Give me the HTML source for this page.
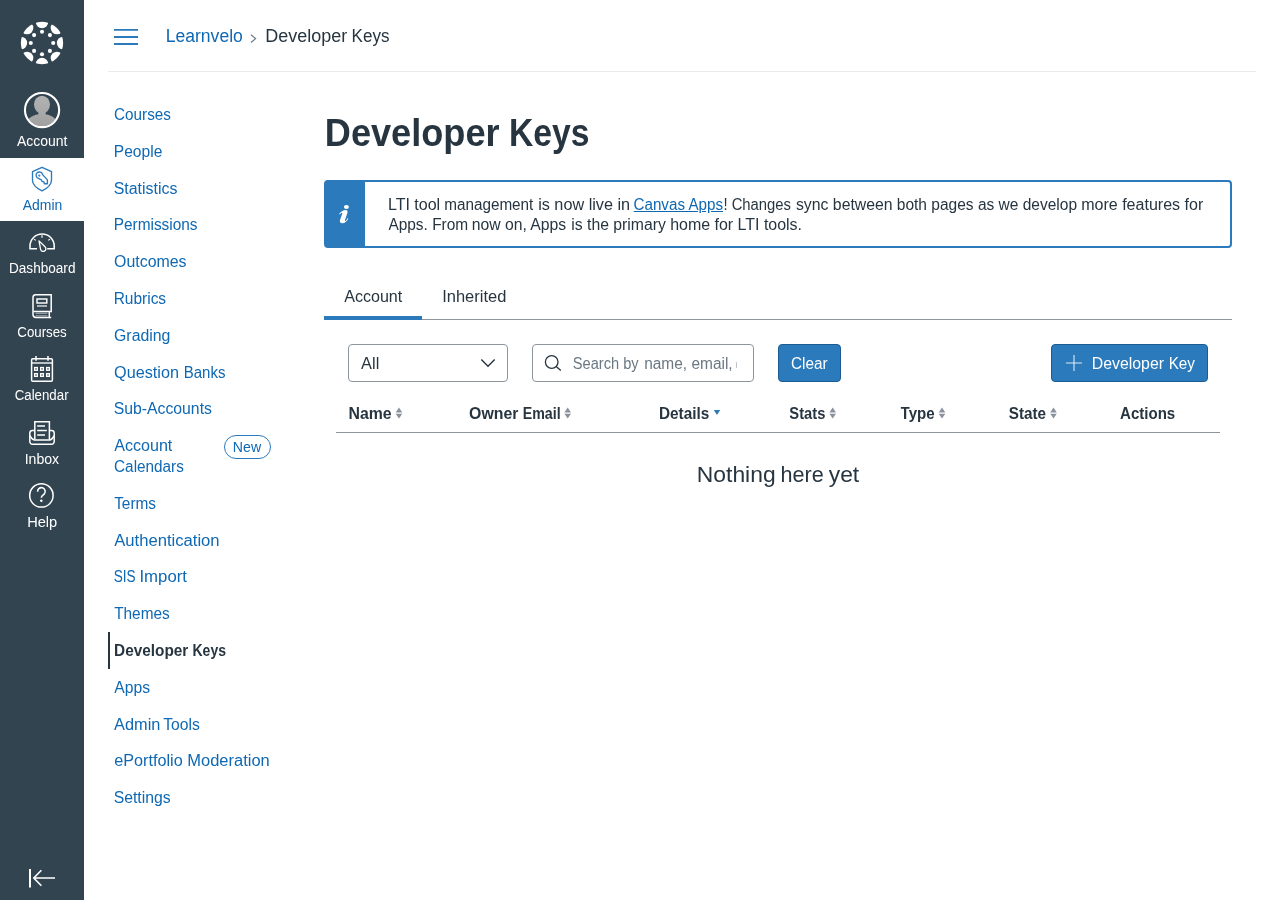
<!DOCTYPE html>
<html lang="en">
<head>
<meta charset="utf-8">
<title>Developer Keys</title>
<style>
*{box-sizing:border-box;margin:0;padding:0}
html,body{width:1280px;height:900px;overflow:hidden;background:#fff}
body{font-family:"Liberation Sans",sans-serif;color:#273540;font-size:16px;position:relative}
a{color:#0E68B3;text-decoration:none}
svg{position:absolute;overflow:visible}
.t{position:absolute;display:block;white-space:nowrap;transform-origin:0 0;line-height:1.2;font-size:16px}
.f14{font-size:14px}.f13{font-size:13px}.f18{font-size:18px}.f22{font-size:22px}.f38{font-size:38px}
.b{font-weight:bold}
.lnk{color:#0E68B3}
.wh{color:#fff}
#gnav{position:absolute;left:0;top:0;width:84px;height:900px;background:#334451}
#gnav .act{position:absolute;left:0;top:158px;width:84px;height:63px;background:#fff}
#hdr{position:absolute;left:108px;top:0;width:1148px;height:72px;border-bottom:1px solid #E8EAEC}
#snav .bar{position:absolute;left:108px;top:632px;width:2px;height:37px;background:#273540}
#snav .pill{position:absolute;left:224px;top:435px;width:47px;height:24px;border:1px solid #2B7ABC;border-radius:12px}
#alert{position:absolute;left:324px;top:180px;width:908px;height:68px;border:2px solid #2B7ABC;border-radius:4px;background:#fff}
#alert .strip{position:absolute;left:0;top:0;width:39px;height:64px;background:#2B7ABC}
#tabs{position:absolute;left:324px;top:276px;width:908px;height:44px;border-bottom:1px solid #8D959F}
#tabs .sel{position:absolute;left:0;top:40px;width:98px;height:4px;background:#2B7ABC}
.box{position:absolute;border:1px solid #8D959F;border-radius:4px;background:#fff;height:38px;top:344px}
.btn{position:absolute;top:344px;height:38px;background:#2B7ABC;border:1px solid #1C5C93;border-radius:4px}
#thead{position:absolute;left:336px;top:394px;width:884px;height:39px;border-bottom:1px solid #8D959F}
</style>
</head>
<body>
<nav id="gnav">
  <div class="act"></div>
  <svg style="left:0;top:0" width="84" height="900" viewBox="0 0 84 900" fill="none">
    <defs>
      <clipPath id="lgc"><circle cx="42" cy="43" r="21.15"/></clipPath>
      <clipPath id="avc"><circle cx="42" cy="110" r="16.3"/></clipPath>
      <linearGradient id="avg" gradientUnits="userSpaceOnUse" x1="0" y1="95" x2="0" y2="127"><stop offset="0" stop-color="#b3b3b3"/><stop offset="1" stop-color="#a0a0a0"/></linearGradient>
    </defs>
    <g clip-path="url(#lgc)" fill="#fff"><circle cx="42.00" cy="21.85" r="6.3"/><circle cx="56.96" cy="28.04" r="6.3"/><circle cx="63.15" cy="43.00" r="6.3"/><circle cx="56.96" cy="57.96" r="6.3"/><circle cx="42.00" cy="64.15" r="6.3"/><circle cx="27.04" cy="57.96" r="6.3"/><circle cx="20.85" cy="43.00" r="6.3"/><circle cx="27.04" cy="28.04" r="6.3"/></g><g fill="#fff"><circle cx="42.00" cy="31.80" r="2.05"/><circle cx="49.92" cy="35.08" r="2.05"/><circle cx="53.20" cy="43.00" r="2.05"/><circle cx="49.92" cy="50.92" r="2.05"/><circle cx="42.00" cy="54.20" r="2.05"/><circle cx="34.08" cy="50.92" r="2.05"/><circle cx="30.80" cy="43.00" r="2.05"/><circle cx="34.08" cy="35.08" r="2.05"/></g>
    <!-- avatar -->
    <g clip-path="url(#avc)" fill="url(#avg)"><ellipse cx="42" cy="104.6" rx="8" ry="8.9"/><rect x="38.4" y="110" width="7.2" height="6"/><ellipse cx="42" cy="124.2" rx="15.6" ry="10.3"/></g>
    <circle cx="42.05" cy="110.05" r="17.1" stroke="#fff" stroke-width="2.1"/>
    <!-- admin shield -->
    <g stroke="#2B7ABC" stroke-width="1.35" stroke-linejoin="round">
      <path d="M42 167.3L32.5 171.7V180.2C32.5 185 37 188.4 42 190.8C47 188.4 51.5 185 51.5 180.2V171.7Z"/>
      <path d="M47.4 179.9L42.6 174.6A3.3 3.3 0 1 0 38.3 178.4L41.4 179.8 42 181.3 43.9 181.9 44.3 183.7H47.4Z"/>
      <circle cx="39.3" cy="175.5" r=".45"/>
    </g>
    <!-- dashboard -->
    <g stroke="#fff" stroke-width="1.55">
      <path d="M37 248.7H30V246.1A12.1 12.1 0 0 1 54.2 246.1V248.7H47.2"/>
      <path d="M39 240.9L45 246.7A2.7 2.7 0 1 1 40.5 249Z" stroke-width="1.3" stroke-linejoin="round"/>
      <path d="M42 235.2V237.8M34.1 239.1L35.7 240.4M49.9 239.1L48.3 240.4" stroke-width="1.2"/>
    </g>
    <!-- courses -->
    <g stroke="#fff" stroke-width="1.5">
      <path d="M51.2 311.5V294.8H35.7A2.7 2.7 0 0 0 33 297.5V314.6A2.9 2.9 0 0 0 35.9 317.5H51.2"/>
      <path d="M33.4 311.5H52M49.3 311.5V317.5"/>
      <path d="M35.6 313.3H47.4M35.6 315.8H47.4" stroke-width=".8" stroke-opacity=".75"/>
      <rect x="37" y="299" width="9.8" height="4" stroke-width="1.45"/>
      <path d="M37 306H47" stroke-width="1.3" stroke-opacity=".9"/>
    </g>
    <!-- calendar -->
    <g stroke="#fff" stroke-width="1.5">
      <rect x="31.6" y="358.8" width="20.8" height="22.4" rx="1.3"/>
      <path d="M31.6 363H52.4" stroke-opacity=".9"/>
      <path d="M36 356V360.7M48 356V360.7"/>
      <g stroke-width="1.35">
        <rect x="34.65" y="367.55" width="2.7" height="2.7"/><rect x="40.65" y="367.55" width="2.7" height="2.7"/><rect x="46.65" y="367.55" width="2.7" height="2.7"/>
        <rect x="34.65" y="373.65" width="2.7" height="2.7"/><rect x="40.65" y="373.65" width="2.7" height="2.7"/><rect x="46.65" y="373.65" width="2.7" height="2.7"/>
      </g>
    </g>
    <!-- inbox -->
    <g stroke="#fff" stroke-width="1.5">
      <path d="M34.8 439.6V421.8H49.4V439.6"/>
      <path d="M34.8 430.6H32.5A2.7 2.7 0 0 0 29.8 433.3V441.5A2.7 2.7 0 0 0 32.5 444.2H51.5A2.7 2.7 0 0 0 54.2 441.5V433.3A2.7 2.7 0 0 0 51.5 430.6H49.4"/>
      <path d="M30 435.6C31.2 437.6 32 440 34.6 440H49.6C52.2 440 53 437.6 54 435.6"/>
      <path d="M37.2 426H45M37.2 430.5H46.8M37.2 435H45" stroke-width="1.4"/>
    </g>
    <!-- help -->
    <g stroke="#fff" stroke-width="1.5">
      <circle cx="41.4" cy="495.4" r="11.7"/>
      <path d="M37.6 491.7A3.8 3.8 0 1 1 44.3 493.9C42.8 495.3 41.3 495.9 41.3 497.8" stroke-width="1.55"/>
      <circle cx="41.3" cy="500.7" r="1.25" fill="#fff" stroke="none"/>
    </g>
    <!-- collapse -->
    <g stroke="#fff" stroke-width="1.6">
      <path d="M30 869V887.5" stroke-width="2"/>
      <path d="M55 878H34.2M41.4 870.3L33.8 878 41.4 885.7"/>
    </g>
  </svg>

  <span id="g_account" class="t f14 wh" style="left:16px;top:133px;transform:translateX(0.90px) scaleX(1.0004) translateZ(0)">Account</span>
  <span id="g_admin" class="t f14 lnk" style="left:22px;top:197px;transform:translateX(0.75px) scaleX(0.9990) translateZ(0)">Admin</span>
  <span id="g_dash" class="t f14 wh" style="left:8px;top:260px;transform:translateX(0.97px) scaleX(0.9708) translateZ(0)">Dashboard</span>
  <span id="g_courses" class="t f14 wh" style="left:17px;top:324px;transform:translateX(0.28px) scaleX(0.9492) translateZ(0)">Courses</span>
  <span id="g_cal" class="t f14 wh" style="left:14px;top:387px;transform:translateX(0.64px) scaleX(0.9492) translateZ(0)">Calendar</span>
  <span id="g_inbox" class="t f14 wh" style="left:24px;top:451px;transform:translateX(0.68px) scaleX(1.0072) translateZ(0)">Inbox</span>
  <span id="g_help" class="t f14 wh" style="left:27px;top:514px;transform:translateX(0.15px) scaleX(1.0454) translateZ(0)">Help</span>
</nav>

<header id="hdr">
  <svg style="left:6px;top:24px" width="24" height="24" viewBox="0 0 24 24"><path d="M0 5.9h24M0 13h24M0 20h24" stroke="#2B7ABC" stroke-width="1.8" fill="none"/></svg>
  <svg style="left:142px;top:33.5px" width="7" height="9" viewBox="0 0 7 9"><path d="M1 .7L5.6 4.6 1 8.5" stroke="#6A7883" stroke-width="1.2" fill="none"/></svg>
</header>
<a id="c1" class="t f18 lnk" style="left:165px;top:26px;transform:translateX(0.74px) scaleX(0.9749) translateZ(0)">Learnvelo</a>
<span id="c2a" class="t f18" style="left:265px;top:26px;transform:translateX(0.36px) scaleX(0.9987) translateZ(0)">Developer</span>
<span id="c2b" class="t f18" style="left:351px;top:26px;transform:translateX(0.59px) scaleX(0.9457) translateZ(0)">Keys</span>

<nav id="snav">
  <a id="s0" class="t lnk" style="left:114px;top:105px;transform:translateX(0.09px) scaleX(0.9526) translateZ(0)">Courses</a>
  <a id="s1" class="t lnk" style="left:113px;top:142px;transform:translateX(0.82px) scaleX(0.9729) translateZ(0)">People</a>
  <a id="s2" class="t lnk" style="left:113px;top:179px;transform:translateX(0.65px) scaleX(0.9951) translateZ(0)">Statistics</a>
  <a id="s3" class="t lnk" style="left:113px;top:215px;transform:translateX(0.70px) scaleX(0.9625) translateZ(0)">Permissions</a>
  <a id="s4" class="t lnk" style="left:114px;top:252px;transform:translateX(0.10px) scaleX(0.9938) translateZ(0)">Outcomes</a>
  <a id="s5" class="t lnk" style="left:113px;top:289px;transform:translateX(0.67px) scaleX(0.9668) translateZ(0)">Rubrics</a>
  <a id="s6" class="t lnk" style="left:114px;top:326px;transform:translateX(0.05px) scaleX(0.9900) translateZ(0)">Grading</a>
  <a id="s7a" class="t lnk" style="left:114px;top:363px;transform:translateX(0.09px) scaleX(1.0130) translateZ(0)">Question</a>
  <a id="s7b" class="t lnk" style="left:183px;top:363px;transform:translateX(0.76px) scaleX(0.9372) translateZ(0)">Banks</a>
  <a id="s8" class="t lnk" style="left:113px;top:399px;transform:translateX(0.78px) scaleX(0.9850) translateZ(0)">Sub-Accounts</a>
  <a id="s9a" class="t lnk" style="left:114px;top:436px;transform:translateX(0.19px) scaleX(1.0055) translateZ(0)">Account</a>
  <a id="s9b" class="t lnk" style="left:114px;top:457px;transform:translateX(0.08px) scaleX(0.9557) translateZ(0)">Calendars</a>
  <span class="pill"></span>
  <span id="s9p" class="t f14 lnk" style="left:232px;top:439px;transform:translateX(0.82px) scaleX(1.0089) translateZ(0)">New</span>
  <a id="s10" class="t lnk" style="left:114px;top:494px;transform:translateX(0.13px) scaleX(0.9631) translateZ(0)">Terms</a>
  <a id="s11" class="t lnk" style="left:114px;top:531px;transform:translateX(0.18px) scaleX(1.0396) translateZ(0)">Authentication</a>
  <a id="s12a" class="t lnk" style="left:113px;top:567px;transform:translateX(0.70px) scaleX(0.8493) translateZ(0)">SIS</a>
  <a id="s12b" class="t lnk" style="left:139px;top:567px;transform:translateX(0.47px) scaleX(1.0470) translateZ(0)">Import</a>
  <a id="s13" class="t lnk" style="left:114px;top:604px;transform:translateX(0.13px) scaleX(0.9610) translateZ(0)">Themes</a>
  <span class="bar"></span>
  <span id="s14a" class="t b" style="left:114px;top:641px;transform:translateX(0.10px) scaleX(0.9591) translateZ(0)">Developer</span>
  <span id="s14b" class="t b" style="left:192px;top:641px;transform:translateX(0.48px) scaleX(0.8752) translateZ(0)">Keys</span>
  <a id="s15" class="t lnk" style="left:114px;top:678px;transform:translateX(0.22px) scaleX(0.9811) translateZ(0)">Apps</a>
  <a id="s16a" class="t lnk" style="left:114px;top:715px;transform:translateX(0.12px) scaleX(1.0198) translateZ(0)">Admin</a>
  <a id="s16b" class="t lnk" style="left:163px;top:715px;transform:translateX(0.13px) scaleX(0.9798) translateZ(0)">Tools</a>
  <a id="s17a" class="t lnk" style="left:114px;top:751px;transform:translateX(0.22px) scaleX(1.0127) translateZ(0)">ePortfolio</a>
  <a id="s17b" class="t lnk" style="left:187px;top:751px;transform:translateX(0.31px) scaleX(1.0296) translateZ(0)">Moderation</a>
  <a id="s18" class="t lnk" style="left:113px;top:788px;transform:translateX(0.65px) scaleX(0.9849) translateZ(0)">Settings</a>
</nav>

<main>
  <h1 id="h1a" class="t f38 b" style="left:324px;top:111px;transform:translateX(0.80px) scaleX(0.9511) translateZ(0)">Developer</h1>
  <span id="h1b" class="t f38 b" style="left:508px;top:111px;transform:translateX(0.94px) scaleX(0.8862) translateZ(0)">Keys</span>
  <div id="alert">
    <div class="strip"></div>
  </div>
  <svg style="left:0;top:0" width="1280" height="900" viewBox="0 0 1280 900"><g fill="#fff"><ellipse cx="346.4" cy="207" rx="2.5" ry="2.1"/><path d="M339.1 213.9C340.6 212 343.2 210.1 345.7 210.1C347.3 210.1 347.9 211.2 347.4 212.9L344.9 220.2C344.7 221 345.2 221.1 345.8 220.7C346.6 220.1 347.2 219.1 347.7 218.1L348.3 218.5C347.3 220.9 344.9 223.3 342.2 223.3C340.3 223.3 339.4 222 340 220.1L342.3 213.6C342.6 212.7 342.1 212.5 341.4 212.9C340.7 213.3 340.1 213.9 339.6 214.4Z"/></g></svg>
  <span id="a1" class="t" style="left:387px;top:195px;transform:translateX(0.92px) scaleX(1.0017) translateZ(0)">LTI tool</span>
  <span id="a2" class="t" style="left:444px;top:195px;transform:translateX(0.15px) scaleX(0.9553) translateZ(0)">management</span>
  <span id="a3" class="t" style="left:538px;top:195px;transform:translateX(0.13px) scaleX(1.0143) translateZ(0)">is now live in</span>
  <a id="al1b" class="t lnk" style="text-decoration:underline;left:633px;top:195px;transform:translateX(0.50px) scaleX(0.9493) translateZ(0)">Canvas Apps</a>
  <span id="c1x" class="t" style="left:723px;top:195px;transform:translateX(0.40px) scaleX(0.9272) translateZ(0)">! Changes</span>
  <span id="c2x" class="t" style="left:795px;top:195px;transform:translateX(0.92px) scaleX(0.9885) translateZ(0)">sync between</span>
  <span id="c3x" class="t" style="left:896px;top:195px;transform:translateX(0.80px) scaleX(0.9698) translateZ(0)">both pages</span>
  <span id="c4x" class="t" style="left:977px;top:195px;transform:translateX(0.90px) scaleX(0.9692) translateZ(0)">as we develop</span>
  <span id="c5x" class="t" style="left:1081px;top:195px;transform:translateX(0.18px) scaleX(1.0019) translateZ(0)">more features for</span>
  <span id="b1" class="t" style="left:388px;top:215px;transform:translateX(0.38px) scaleX(0.9655) translateZ(0)">Apps. From</span>
  <span id="b2" class="t" style="left:471px;top:215px;transform:translateX(0.72px) scaleX(0.9837) translateZ(0)">now on, Apps</span>
  <span id="b3" class="t" style="left:571px;top:215px;transform:translateX(0.24px) scaleX(0.9855) translateZ(0)">is the primary</span>
  <span id="b4" class="t" style="left:670px;top:215px;transform:translateX(0.14px) scaleX(0.9977) translateZ(0)">home for LTI tools.</span>
  <div id="tabs"><div class="sel"></div></div>
  <span id="tab1" class="t" style="left:344px;top:287px;transform:translateX(0.19px) scaleX(1.0047) translateZ(0)">Account</span>
  <span id="tab2" class="t" style="left:442px;top:287px;transform:translateX(0.22px) scaleX(1.0293) translateZ(0)">Inherited</span>

  <div class="box" style="left:348px;width:160px"></div>
  <span id="sel" class="t" style="left:361px;top:354px;transform:translateX(0.12px) scaleX(1.0214) translateZ(0)">All</span>
  <svg style="left:480px;top:358px" width="16" height="10" viewBox="0 0 16 10"><path d="M1.3 1.5L8 8.3 14.7 1.5" stroke="#273540" stroke-width="1.4" fill="none"/></svg>

  <div class="box" style="left:532px;width:222px"></div>
  <svg style="left:543px;top:354px" width="20" height="18" viewBox="0 0 20 18"><circle cx="8.7" cy="8" r="6.3" stroke="#273540" stroke-width="1.3" fill="none"/><path d="M13.2 12.5L17.8 16.6" stroke="#273540" stroke-width="1.3"/></svg>
  <span id="ph1" class="t" style="color:#6A7883;left:572px;top:354px;transform:translateX(0.74px) scaleX(0.9140) translateZ(0)">Search by</span>
  <span id="ph2" class="t" style="color:#6A7883;left:644px;top:354px;transform:translateX(0.14px) scaleX(0.9662) translateZ(0)">name, email,</span>

  <div class="sl" style="position:absolute;left:736px;top:362px;width:1px;height:6px;background:#6A7883;opacity:.45;border-radius:1px"></div>
  <div class="btn" style="left:778px;width:63px"></div>
  <span id="clear" class="t wh" style="left:790px;top:354px;transform:translateX(0.97px) scaleX(0.9565) translateZ(0)">Clear</span>
  <div class="btn" style="left:1051px;width:157px"></div>
  <svg style="left:1066px;top:355px" width="16" height="16" viewBox="0 0 16 16"><path d="M8 0v16M0 8h16" stroke="#fff" stroke-opacity=".85" stroke-width="1.1"/></svg>
  <span id="dk1" class="t wh" style="left:1091px;top:354px;transform:translateX(0.73px) scaleX(0.9907) translateZ(0)">Developer</span>
  <span id="dk2" class="t wh" style="left:1168px;top:354px;transform:translateX(0.68px) scaleX(0.9520) translateZ(0)">Key</span>

  <div id="thead"></div>
  <span id="th0" class="t b" style="left:348px;top:404px;transform:translateX(0.53px) scaleX(0.9897) translateZ(0)">Name</span>
  <span id="th1a" class="t b" style="left:469px;top:404px;transform:translateX(0.11px) scaleX(0.9916) translateZ(0)">Owner</span>
  <span id="th1b" class="t b" style="left:522px;top:404px;transform:translateX(0.76px) scaleX(0.8881) translateZ(0)">Email</span>
  <span id="th2" class="t b" style="left:658px;top:404px;transform:translateX(0.96px) scaleX(0.9583) translateZ(0)">Details</span>
  <span id="th3" class="t b" style="left:789px;top:404px;transform:translateX(0.37px) scaleX(0.9189) translateZ(0)">Stats</span>
  <span id="th4" class="t b" style="left:900px;top:404px;transform:translateX(0.55px) scaleX(0.9428) translateZ(0)">Type</span>
  <span id="th5" class="t b" style="left:1008px;top:404px;transform:translateX(0.81px) scaleX(0.9517) translateZ(0)">State</span>
  <span id="th6" class="t b" style="left:1120px;top:404px;transform:translateX(0.08px) scaleX(0.9401) translateZ(0)">Actions</span>
  <svg style="left:0;top:0" width="1280" height="900" viewBox="0 0 1280 900">
    <g fill="#8A929D">
      <path d="M399.0 407.5L402.3 412.4H395.7ZM399.0 418.5L402.3 413.7H395.7Z"/>
      <path d="M567.7 407.5L571.0 412.4H564.4ZM567.7 418.5L571.0 413.7H564.4Z"/>
      <path d="M832.7 407.5L836.0 412.4H829.4ZM832.7 418.5L836.0 413.7H829.4Z"/>
      <path d="M942.0 407.5L945.3 412.4H938.7ZM942.0 418.5L945.3 413.7H938.7Z"/>
      <path d="M1053.5 407.5L1056.8 412.4H1050.2ZM1053.5 418.5L1056.8 413.7H1050.2Z"/>
    </g>
    <path d="M713.8 410.1H720.2L717.0 415.1Z" fill="#2B7ABC"/>
  </svg>

  <span id="e1" class="t f22" style="left:696px;top:462px;transform:translateX(0.85px) scaleX(1.0386) translateZ(0)">Nothing</span>
  <span id="e2" class="t f22" style="left:780px;top:462px;transform:translateX(0.48px) scaleX(0.9806) translateZ(0)">here</span>
  <span id="e3" class="t f22" style="left:828px;top:462px;transform:translateX(0.76px) scaleX(1.0373) translateZ(0)">yet</span>
</main>
</body>
</html>
